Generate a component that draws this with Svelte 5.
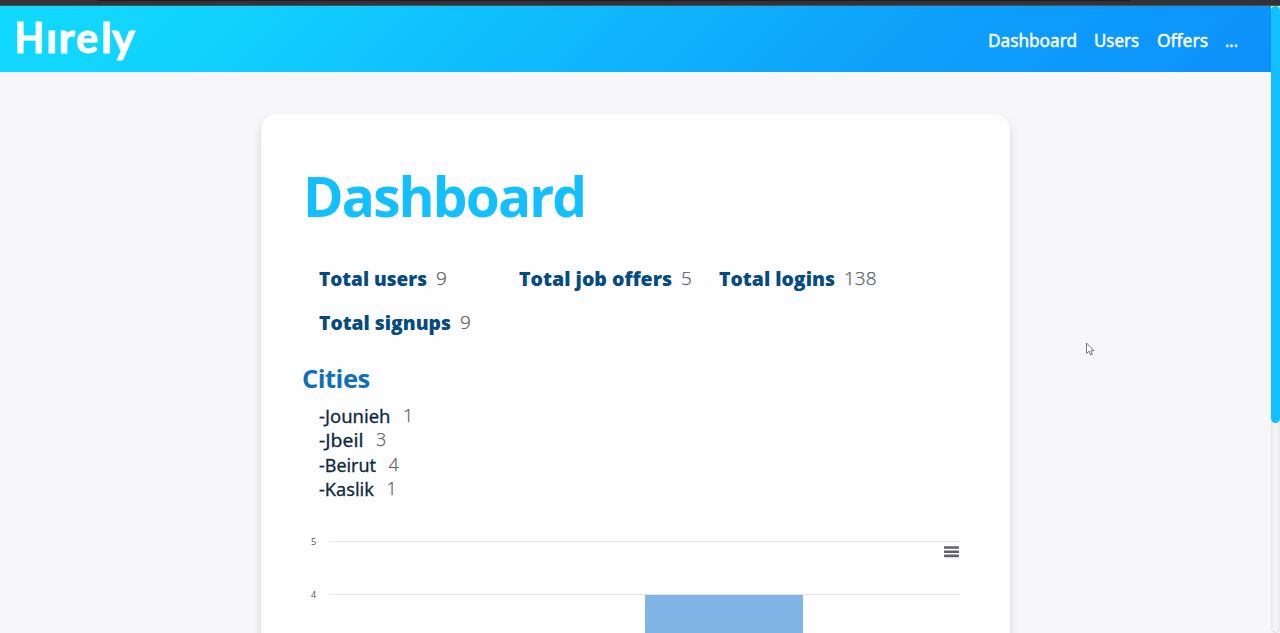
<script>
  const mark = [
    { ch: 'H', x: -0.5, sx: 0.93 },
    { ch: 'ı', x: 31, sx: 1.05 },
    { ch: 'r', x: 43.5, sx: 1.05 },
    { ch: 'e', x: 61, sx: 1 },
    { ch: 'l', x: 86, sx: 1.05 },
    { ch: 'y', x: 97, sx: 1.04 }
  ];
  const links = [
    { label: 'Dashboard', width: 89 },
    { label: 'Users', width: 45 },
    { label: 'Offers', width: 51 },
    { label: '...', width: 13 }
  ];
  const stats = [
    { label: 'Total users', value: 9, width: 108 },
    { label: 'Total job offers', value: 5, width: 153 },
    { label: 'Total logins', value: 138, width: 116 },
    { label: 'Total signups', value: 9, width: 132 }
  ];
  const cities = [
    { name: 'Jounieh', value: 1, width: 71.5 },
    { name: 'Jbeil', value: 3, width: 44.5 },
    { name: 'Beirut', value: 4, width: 57 },
    { name: 'Kaslik', value: 1, width: 55 }
  ];
</script>

<div class="window">
  <div class="chrome"><div class="tab"></div></div>
  <div class="viewport">
    <div class="page">
      <header>
        <svg class="logo" width="122" height="48" viewBox="0 0 122 48" role="img" aria-label="Hirely">
          {#each mark as m}
            <text transform="translate({m.x} 38) scale({m.sx} 1)">{m.ch}</text>
          {/each}
        </svg>
        <nav>
          {#each links as l}
            <a href="#top"><svg width={l.width} height="26"><text x="0" y="19" textLength={l.width} lengthAdjust="spacingAndGlyphs">{l.label}</text></svg></a>
          {/each}
        </nav>
      </header>
      <main>
        <section class="card">
          <h1>Dashboard</h1>
          <div class="stats">
            {#each stats as s}
              <div class="stat">
                <svg class="label" width={s.width} height="28"><text x="0" y="20.5" textLength={s.width} lengthAdjust="spacingAndGlyphs">{s.label}</text></svg>
                <span class="value">{s.value}</span>
              </div>
            {/each}
          </div>
          <h2>Cities</h2>
          <ul>
            {#each cities as c}
              <li>
                <svg class="city" width={c.width} height="24"><text x="0" y="18.5" textLength={c.width} lengthAdjust="spacingAndGlyphs">-{c.name}</text></svg>
                <span class="value">{c.value}</span>
              </li>
            {/each}
          </ul>
          <div class="chart">
            <div class="axis"><span>5</span><span>4</span></div>
            <div class="plot">
              <div class="band">
                <svg class="menu" width="15" height="12" viewBox="0 0 15 12"><path d="M1 1.5H14M1 5.7H14M1 9.9H14" /></svg>
              </div>
              <div class="band"><div class="bar"></div></div>
            </div>
          </div>
        </section>
      </main>
    </div>
    <div class="scroll"><div class="thumb"></div></div>
  </div>
  <svg class="cursor" width="10" height="15" viewBox="0 0 10 15"><path d="M1.5 1V11.5L4 9.2L5.7 13L7.3 12.2L5.8 8.7H9Z" /></svg>
</div>

<style>
  :global(body) { overflow: hidden; }
  .window {
    position: relative;
    height: 633px;
    overflow: hidden;
    display: flex;
    flex-direction: column;
    background: #f7f6f9;
    font-family: "Open Sans", "Noto Sans", sans-serif;
  }
  .chrome { height: 5px; flex: none; background: #323238; border-bottom: 1px solid #435460; }
  .tab { width: 1033px; height: 1px; margin-left: 97px; background: #1d1c22; }
  .viewport { flex: 1; min-height: 0; display: flex; }
  .page { flex: 1; min-width: 0; }
  header {
    height: 66px;
    display: flex;
    align-items: center;
    justify-content: space-between;
    background: linear-gradient(135deg, #11d9fe 0%, #11d4fe 15%, #0e9ffb 72%, #0c91fb 100%);
  }
  .logo { margin-left: 15px; fill: #fff; stroke: #fff; stroke-width: .9; overflow: visible; }
  .logo text { font: 700 41.5px Lato, sans-serif; }
  nav { display: flex; gap: 17.5px; padding: 4px 33px 0 0; }
  nav svg { display: block; fill: #fff; stroke: #fff; stroke-width: .45; overflow: visible; }
  nav text { font-family: "Noto Sans", sans-serif; font-size: 18px; }
  main { display: flex; padding-left: 261px; margin-top: 42px; }
  .card {
    box-sizing: border-box;
    width: 749px;
    height: 620px;
    padding: 42px;
    border-radius: 16px;
    background: #fefdff;
    box-shadow: 0 5px 10px rgba(0, 0, 0, 0.14);
  }
  h1 { margin: 0; height: 80px; font-size: 55px; line-height: 80px; font-weight: 700; color: #14bfff; letter-spacing: -1.9px; }
  .stats { display: grid; grid-template-columns: repeat(3, 200px); grid-auto-rows: 44px; margin: 21px 0 0 16px; }
  .stat { display: flex; align-items: center; height: 44px; gap: 9px; }
  .label { fill: #064b80; overflow: visible; flex: none; }
  .label text { font-size: 19.5px; font-weight: 800; }
  .value { color: #626264; font-size: 19px; font-weight: 300; line-height: 28px; -webkit-text-stroke: .25px #626264; position: relative; top: -1px; }
  h2 { margin: 15px 0 0 -1px; font-size: 25.5px; line-height: 36px; font-weight: 700; color: #0f70b9; letter-spacing: -.5px; }
  ul { margin: 8px 0 0 16px; padding: 0; list-style: none; }
  li { display: flex; height: 24.33px; gap: 12.5px; align-items: center; }
  .city { fill: #102a3d; stroke: #102a3d; stroke-width: .3; overflow: visible; }
  .city text { font-family: "Noto Sans", sans-serif; font-size: 18px; }
  li .value { font-size: 18px; line-height: 24px; }
  .chart { display: flex; margin-top: 40px; }
  .axis { width: 26px; padding-left: 8px; box-sizing: border-box; display: grid; grid-template-rows: 53px 53px; margin-top: -6px; font-size: 9px; line-height: 14px; color: #555; }
  .plot { width: 631px; }
  .band { box-sizing: border-box; height: 53px; border-top: 1px solid #e6e6e8; display: flex; }
  .menu { margin: 4px 1px 0 auto; stroke: #626268; stroke-width: 2.6; stroke-linecap: round; }
  .bar { width: 158px; height: 60px; margin-left: 316px; background: #81b5e7; }
  .scroll { width: 9px; border-radius: 5px; background: #f4f4f6; box-shadow: inset 0 0 3px #d5d5d9; }
  .thumb { height: 417px; border-radius: 5px; background: #12bfff; }
  .cursor { position: absolute; left: 1085px; top: 342px; fill: #fff; stroke: #77777c; stroke-width: 1; }
</style>
